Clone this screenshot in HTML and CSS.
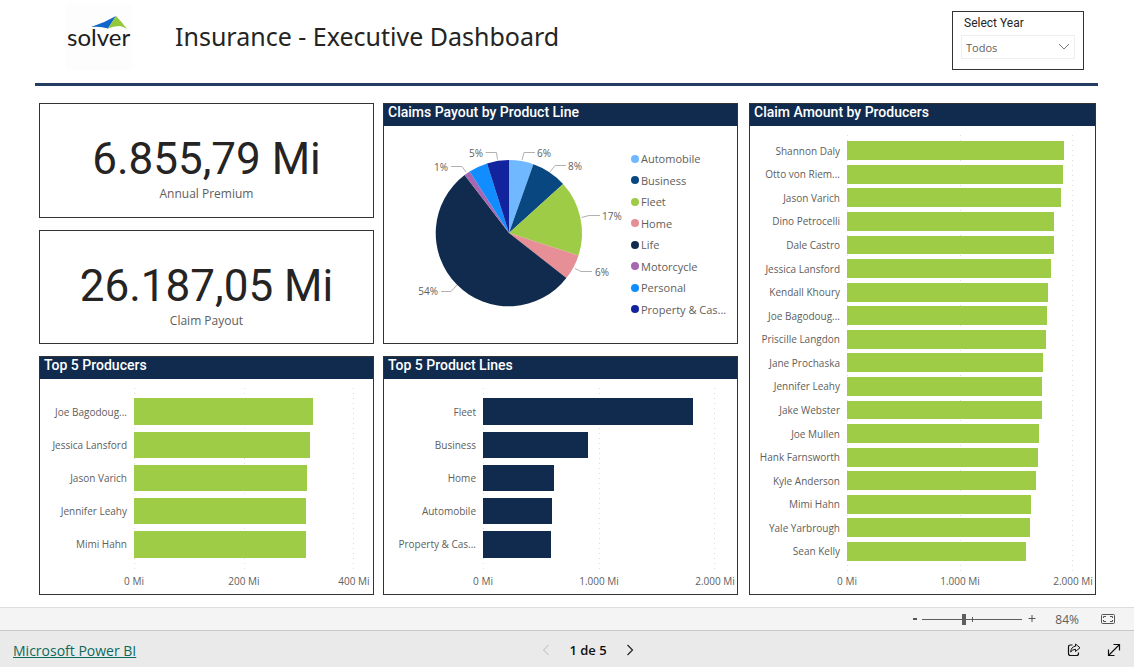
FILE: index.html
```html
<!DOCTYPE html>
<html lang="en">
<head>
<meta charset="utf-8">
<title>Insurance - Executive Dashboard</title>
<link rel="stylesheet" href="styles.css">
</head>
<body>
<main class="report">
  <header class="report-header">
    <svg class="logo" width="66" height="66" viewBox="0 0 66 66" role="img" aria-label="solver">
      <rect width="66" height="66" fill="#fdfdfd"/>
      <path d="M25 23Q38 19 50 12L42 24.500Q34 22 25 23Z" fill="#1166cc"/>
      <path d="M50 12Q55 17 61 25Q56 22 53 22Q47 22 42 24.500Z" fill="#93c83a"/>
      <text x="1" y="42" class="logo-text">solver</text>
    </svg>
    <h1 class="report-title">Insurance - Executive Dashboard</h1>
    <div class="slicer">
      <label class="slicer-label" for="year">Select Year</label>
      <div class="slicer-field">
        <select id="year" class="slicer-select"><option>Todos</option></select>
        <svg class="slicer-chevron" width="12" height="8" viewBox="0 0 12 8"><path d="M1 1l5 5 5-5" fill="none" stroke="#777"/></svg>
      </div>
    </div>
  </header>

  <div class="board">
    <div class="board-left">
      <div class="kpis">
        <section class="card kpi"><p class="kpi-value">6.855,79 Mi</p><p class="kpi-label">Annual Premium</p></section>
        <section class="card kpi"><p class="kpi-value">26.187,05 Mi</p><p class="kpi-label">Claim Payout</p></section>
      </div>

      <section class="card">
        <h2 class="card-title">Claims Payout by Product Line</h2>
        <div class="pie-body">
          <svg class="pie" width="240" height="216" viewBox="0 0 240 216">
            <path d="M125 106V33A73 73 0 0 1 149.400 37.200Z" fill="#70b8ff"/>
            <path d="M125 106L149.400 37.200A73 73 0 0 1 179.100 57Z" fill="#094780"/>
            <path d="M125 106L179.100 57A73 73 0 0 1 194.500 128.400Z" fill="#9fcc47"/>
            <path d="M125 106L194.500 128.400A73 73 0 0 1 182.400 151Z" fill="#e68f96"/>
            <path d="M125 106L182.400 151A73 73 0 1 1 80.600 48.100Z" fill="#112b4e"/>
            <path d="M125 106L80.600 48.100A73 73 0 0 1 85.600 44.600Z" fill="#a666b0"/>
            <path d="M125 106L85.600 44.600A73 73 0 0 1 103 36.400Z" fill="#118dff"/>
            <path d="M125 106L103 36.400A73 73 0 0 1 125 33Z" fill="#12239e"/>
            <g class="leader">
              <path d="M138 33l2-7.500h11"/>
              <path d="M166 45l5-6.500h11"/>
              <path d="M197.500 90.500l7.500-2h11"/>
              <path d="M191 141.500l6 3h11"/>
              <path d="M73 158l-6 6.500h-10"/>
              <path d="M82 45l-4-5.500h-11"/>
              <path d="M113.500 32.500l-1-7h-11"/>
            </g>
            <g class="pie-label">
              <text x="153" y="30">6%</text>
              <text x="184" y="43">8%</text>
              <text x="218" y="93">17%</text>
              <text x="211" y="149">6%</text>
              <text x="54" y="168" text-anchor="end">54%</text>
              <text x="64" y="44" text-anchor="end">1%</text>
              <text x="99" y="30" text-anchor="end">5%</text>
            </g>
          </svg>
          <ul class="legend">
            <li class="legend-item c-auto">Automobile</li>
            <li class="legend-item c-business">Business</li>
            <li class="legend-item c-fleet">Fleet</li>
            <li class="legend-item c-home">Home</li>
            <li class="legend-item c-life">Life</li>
            <li class="legend-item c-moto">Motorcycle</li>
            <li class="legend-item c-personal">Personal</li>
            <li class="legend-item c-property">Property &amp; Cas...</li>
          </ul>
        </div>
      </section>

      <section class="card">
        <h2 class="card-title">Top 5 Producers</h2>
        <div class="chart chart-producers">
          <div class="grid-lines"><i></i><i></i><i></i></div>
          <ul class="rows">
            <li class="row"><span class="name">Joe Bagodoug...</span><span class="track"><span class="bar" style="width:81.2%"></span></span></li>
            <li class="row"><span class="name">Jessica Lansford</span><span class="track"><span class="bar" style="width:80.1%"></span></span></li>
            <li class="row"><span class="name">Jason Varich</span><span class="track"><span class="bar" style="width:78.7%"></span></span></li>
            <li class="row"><span class="name">Jennifer Leahy</span><span class="track"><span class="bar" style="width:78.3%"></span></span></li>
            <li class="row"><span class="name">Mimi Hahn</span><span class="track"><span class="bar" style="width:78.2%"></span></span></li>
          </ul>
          <div class="axis"><span class="tick">0 Mi</span><span class="tick">200 Mi</span><span class="tick">400 Mi</span></div>
        </div>
      </section>

      <section class="card">
        <h2 class="card-title">Top 5 Product Lines</h2>
        <div class="chart chart-lines">
          <div class="grid-lines"><i></i><i></i><i></i></div>
          <ul class="rows">
            <li class="row"><span class="name">Fleet</span><span class="track"><span class="bar" style="width:90.6%"></span></span></li>
            <li class="row"><span class="name">Business</span><span class="track"><span class="bar" style="width:45.3%"></span></span></li>
            <li class="row"><span class="name">Home</span><span class="track"><span class="bar" style="width:30.7%"></span></span></li>
            <li class="row"><span class="name">Automobile</span><span class="track"><span class="bar" style="width:29.9%"></span></span></li>
            <li class="row"><span class="name">Property &amp; Cas...</span><span class="track"><span class="bar" style="width:29.2%"></span></span></li>
          </ul>
          <div class="axis"><span class="tick">0 Mi</span><span class="tick">1.000 Mi</span><span class="tick">2.000 Mi</span></div>
        </div>
      </section>
    </div>

    <section class="card board-right">
      <h2 class="card-title">Claim Amount by Producers</h2>
      <div class="chart chart-claims">
        <div class="grid-lines"><i></i><i></i><i></i></div>
        <ul class="rows">
          <li class="row"><span class="name">Shannon Daly</span><span class="track"><span class="bar" style="width:95.9%"></span></span></li>
          <li class="row"><span class="name">Otto von Riem...</span><span class="track"><span class="bar" style="width:95.5%"></span></span></li>
          <li class="row"><span class="name">Jason Varich</span><span class="track"><span class="bar" style="width:94.7%"></span></span></li>
          <li class="row"><span class="name">Dino Petrocelli</span><span class="track"><span class="bar" style="width:91.6%"></span></span></li>
          <li class="row"><span class="name">Dale Castro</span><span class="track"><span class="bar" style="width:91.6%"></span></span></li>
          <li class="row"><span class="name">Jessica Lansford</span><span class="track"><span class="bar" style="width:90.3%"></span></span></li>
          <li class="row"><span class="name">Kendall Khoury</span><span class="track"><span class="bar" style="width:89.1%"></span></span></li>
          <li class="row"><span class="name">Joe Bagodoug...</span><span class="track"><span class="bar" style="width:88.4%"></span></span></li>
          <li class="row"><span class="name">Priscille Langdon</span><span class="track"><span class="bar" style="width:88.1%"></span></span></li>
          <li class="row"><span class="name">Jane Prochaska</span><span class="track"><span class="bar" style="width:86.8%"></span></span></li>
          <li class="row"><span class="name">Jennifer Leahy</span><span class="track"><span class="bar" style="width:86.4%"></span></span></li>
          <li class="row"><span class="name">Jake Webster</span><span class="track"><span class="bar" style="width:86.2%"></span></span></li>
          <li class="row"><span class="name">Joe Mullen</span><span class="track"><span class="bar" style="width:85%"></span></span></li>
          <li class="row"><span class="name">Hank Farnsworth</span><span class="track"><span class="bar" style="width:84.5%"></span></span></li>
          <li class="row"><span class="name">Kyle Anderson</span><span class="track"><span class="bar" style="width:83.5%"></span></span></li>
          <li class="row"><span class="name">Mimi Hahn</span><span class="track"><span class="bar" style="width:81.5%"></span></span></li>
          <li class="row"><span class="name">Yale Yarbrough</span><span class="track"><span class="bar" style="width:81%"></span></span></li>
          <li class="row"><span class="name">Sean Kelly</span><span class="track"><span class="bar" style="width:79.2%"></span></span></li>
        </ul>
        <div class="axis"><span class="tick">0 Mi</span><span class="tick">1.000 Mi</span><span class="tick">2.000 Mi</span></div>
      </div>
    </section>
  </div>
</main>

<div class="zoom-bar">
  <button class="zoom-step" type="button" aria-label="Zoom out"><svg width="6" height="12" viewBox="0 0 6 12"><path d="M1 6h4" stroke="#555" stroke-width="2"/></svg></button>
  <input class="zoom-range" type="range" min="0" max="100" value="41" aria-label="Zoom">
  <button class="zoom-step" type="button" aria-label="Zoom in"><svg width="8" height="12" viewBox="0 0 8 12"><path d="M.5 5.500h7M4 2v7" stroke="#555"/></svg></button>
  <output class="zoom-value">84%</output>
  <button class="icon-button" type="button" aria-label="Fit to page"><svg width="14" height="12" viewBox="0 0 14 12" fill="none" stroke="#555"><rect x=".5" y="1.500" width="13" height="9" rx="1"/><path d="M2.500 5V3.500H5M9 3.500h2.500V5M2.500 7v1.500H5M9 8.500h2.500V7"/></svg></button>
</div>

<footer class="footer">
  <a class="brand-link" href="#">Microsoft Power BI</a>
  <nav class="pager" aria-label="Pages">
    <button class="icon-button" type="button" aria-label="Previous page" disabled><svg width="8" height="12" viewBox="0 0 8 12"><path d="M6.500 1L1.500 6l5 5" fill="none" stroke="#b8b8b8"/></svg></button>
    <span class="pager-text">1 de 5</span>
    <button class="icon-button" type="button" aria-label="Next page"><svg width="8" height="12" viewBox="0 0 8 12"><path d="M1.500 1l5 5-5 5" fill="none" stroke="#222" stroke-width="1.200"/></svg></button>
  </nav>
  <div class="actions">
    <button class="icon-button" type="button" aria-label="Share"><svg width="14" height="14" viewBox="0 0 14 14" fill="none" stroke="#111" stroke-linejoin="round"><path d="M5.500 2H3.500Q1.500 2 1.500 4v6.500q0 2 2 2h6q2 0 2-2V9.500" stroke-width="1.200"/><path d="M8.500 1l4.500 3.800-4.500 3.700V6.300Q5.500 6.200 3.700 9 4 3.700 8.500 3.200Z"/></svg></button>
    <button class="icon-button" type="button" aria-label="Full screen"><svg width="14" height="14" viewBox="0 0 14 14" fill="none" stroke="#111" stroke-width="1.200"><path d="M1.500 12.500l11-11M6.500 1.500h6v6M1.500 6.500v6h6"/></svg></button>
  </div>
</footer>
</body>
</html>
```

FILE: styles.css
```css
* { box-sizing: border-box; }

body {
  margin: 0;
  min-height: 100vh;
  display: flex;
  flex-direction: column;
  background: #fff;
  color: #252423;
  font-family: "Open Sans", "Noto Sans", sans-serif;
}

h1, h2, p, ul { margin: 0; padding: 0; }
ul { list-style: none; }
button { border: 0; padding: 0; background: none; font: inherit; display: flex; }

.report {
  flex: 1;
  display: flex;
  flex-direction: column;
  padding: 0 36px 12px 35px;
}

/* Header */
.report-header {
  display: flex;
  align-items: flex-start;
  min-height: 86px;
  padding: 4px 14px 0 31px;
  border-bottom: 3px solid #233d63;
}
.logo { flex: none; }
.logo-text { font-family: Lato, sans-serif; font-size: 24px; fill: #1c1c1c; }
.report-title {
  flex: 1;
  padding-left: 43px;
  font-family: "Noto Sans", sans-serif;
  font-size: 25px;
  line-height: 64px;
  font-weight: 400;
}
.slicer {
  width: 132px;
  margin-top: 7px;
  padding: 2px 8px 10px;
  border: 1px solid #333;
}
.slicer-label {
  display: block;
  padding-left: 3px;
  font: 12px/18px Roboto, sans-serif;
}
.slicer-field { display: grid; align-items: center; margin-top: 3px; }
.slicer-select {
  grid-area: 1 / 1;
  appearance: none;
  width: 100%;
  height: 24px;
  padding: 0 4px;
  border: 1px solid #eee;
  background: #fff;
  color: #605e5c;
  font: 11px "Open Sans", sans-serif;
}
.slicer-chevron { grid-area: 1 / 1; justify-self: end; margin-right: 5px; pointer-events: none; }

/* Board */
.board {
  flex: 1;
  display: grid;
  grid-template-columns: 699fr 347fr;
  gap: 11px;
  padding: 17px 2px 0 4px;
}
.board-left {
  display: grid;
  grid-template-columns: 335fr 355fr;
  grid-template-rows: 241fr 239fr;
  gap: 12px 9px;
}
.kpis { display: grid; grid-template-rows: 1fr 1fr; gap: 12px; }
.card { display: flex; flex-direction: column; border: 1px solid #333; min-width: 0; }
.card-title {
  padding: 0 4px 6px;
  background: #112b4e;
  color: #fff;
  font: 500 14px/16px Roboto, sans-serif;
}
.kpi { align-items: center; justify-content: center; padding-top: 18px; }
.kpi-value { font: 44px/50px Roboto, sans-serif; }
.kpi-label { font-size: 12px; line-height: 20px; color: #605e5c; }

/* Pie */
.pie-body { flex: 1; display: flex; align-items: flex-end; }
.pie { flex: none; }
.leader { fill: none; stroke: #b3b0ad; }
.pie-label { font-size: 10px; fill: #605e5c; }
.legend { flex: 1; align-self: stretch; display: flex; flex-direction: column; padding: 22px 0 23px 7px; }
.legend-item {
  flex: 1;
  display: flex;
  align-items: center;
  gap: 2px;
  font-size: 11px;
  color: #605e5c;
  white-space: nowrap;
}
.legend-item::before { content: ""; width: 8px; height: 8px; border-radius: 50%; background: currentColor; }
.c-auto::before { background: #70b8ff; }
.c-business::before { background: #094780; }
.c-fleet::before { background: #9fcc47; }
.c-home::before { background: #e68f96; }
.c-life::before { background: #112b4e; }
.c-moto::before { background: #a666b0; }
.c-personal::before { background: #118dff; }
.c-property::before { background: #12239e; }

/* Bar charts */
.chart {
  --label: 94px;
  --end: 19px;
  --bar: #9fcc47;
  position: relative;
  flex: 1;
  display: flex;
  flex-direction: column;
  padding: 16px var(--end) 6px 0;
}
.chart-lines { --label: 99px; --end: 22px; --bar: #112b4e; }
.chart-claims { --label: 97px; --end: 22px; padding-top: 13px; }
.grid-lines {
  position: absolute;
  inset: 9px var(--end) 22px var(--label);
  display: flex;
  justify-content: space-between;
}
.grid-lines i { width: 1px; background: linear-gradient(#ddd 1px, transparent 1px) 0 0 / 1px 5px; }
.rows { position: relative; flex: 1; display: flex; flex-direction: column; margin-bottom: 13px; }
.chart-claims .rows { margin-bottom: 11px; }
.row { flex: 1; display: flex; align-items: center; }
.name {
  width: var(--label);
  padding-right: 7px;
  text-align: right;
  font-size: 10px;
  line-height: 14px;
  color: #605e5c;
  white-space: nowrap;
}
.track { flex: 1; height: 80%; }
.bar { display: block; height: 100%; background: var(--bar); }
.axis {
  display: flex;
  justify-content: space-between;
  margin-left: var(--label);
  font-size: 10px;
  line-height: 14px;
  color: #605e5c;
}
.tick { width: 0; display: flex; justify-content: center; white-space: nowrap; }

/* Zoom bar */
.zoom-bar {
  display: flex;
  align-items: center;
  justify-content: flex-end;
  height: 24px;
  padding-right: 19px;
  border-top: 1px solid #ddd;
  border-bottom: 1px solid #c8c8c8;
  background: #f4f4f4;
}
.zoom-range {
  appearance: none;
  width: 100px;
  height: 12px;
  margin: 0 6px 0 4px;
  background:
    linear-gradient(#605e5c, #605e5c) 50px 50% / 1px 5px no-repeat,
    linear-gradient(#605e5c, #605e5c) 0 50% / 100% 1px no-repeat;
}
.zoom-range::-webkit-slider-thumb { appearance: none; width: 4px; height: 11px; background: #605e5c; }
.zoom-value { margin: 0 22px 0 19px; font-size: 12px; color: #605e5c; }

/* Footer */
.footer {
  display: grid;
  grid-template-columns: 525fr auto 483fr;
  align-items: center;
  height: 36px;
  padding: 2px 13px 0;
  background: #eaeaea;
}
.brand-link { font-size: 14px; color: #0b6a5d; }
.pager { display: flex; align-items: center; gap: 19px; padding: 0 4px; }
.pager-text { font-size: 13px; font-weight: 600; color: #111; }
.actions { display: flex; justify-content: flex-end; gap: 26px; }
```
